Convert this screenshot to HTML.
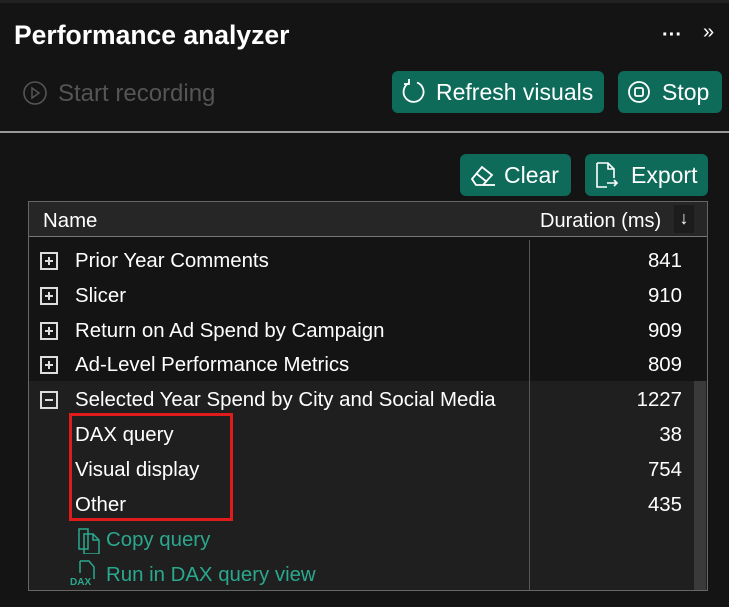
<!DOCTYPE html>
<html><head><style>
*{margin:0;padding:0;box-sizing:border-box}
body{width:729px;height:607px;background:#141414;font-family:"Liberation Sans",sans-serif;color:#fff;position:relative;overflow:hidden}
.a{position:absolute;white-space:nowrap}
.btn{position:absolute;background:#0e6b5a;border-radius:6px;color:#fff;font-size:23px;display:flex;align-items:center;padding-left:8px}
.row{position:absolute;left:30px;width:676px;height:35px;font-size:20.4px;line-height:35px}
.row .n{position:absolute;left:45px;top:2px}
.row .v{position:absolute;right:24px;top:2px}
.box{position:absolute;left:10px;top:10px;width:18px;height:18px;border:2px solid #ddd}
.box:before{content:"";position:absolute;left:3px;top:6px;width:8px;height:2px;background:#ddd}
.p:after{content:"";position:absolute;left:6px;top:3px;width:2px;height:8px;background:#ddd}
</style></head><body>
<div class="a" style="left:0;top:0;width:729px;height:3px;background:#222"></div>
<div class="a" style="left:14px;top:20px;font-size:26.5px;font-weight:bold">Performance analyzer</div>
<div class="a" style="left:662px;top:24px;font-size:20px;font-weight:bold">···</div>
<div class="a" style="left:703px;top:21px;font-size:20px">»</div>
<svg class="a" style="left:22px;top:80px" width="26" height="26"><circle cx="13" cy="13" r="11" fill="none" stroke="#555" stroke-width="1.6"/><path d="M10 8 L17 13 L10 18Z" fill="none" stroke="#555" stroke-width="1.5"/></svg>
<div class="a" style="left:58px;top:80px;font-size:24px;color:#555">Start recording</div>
<div class="btn" style="left:392px;top:71px;width:212px;height:42px"><svg width="28" height="28"><path d="M9 5 A10 10 0 1 0 17 4.5" fill="none" stroke="#fff" stroke-width="1.8"/><path d="M9 1 L9 6 L4 6" fill="none" stroke="#fff" stroke-width="1.8"/></svg><span style="margin-left:8px">Refresh visuals</span></div>
<div class="btn" style="left:618px;top:71px;width:104px;height:42px"><svg width="28" height="28"><circle cx="13" cy="14" r="10" fill="none" stroke="#fff" stroke-width="1.8"/><rect x="9" y="10" width="8" height="8" rx="1.5" fill="none" stroke="#fff" stroke-width="1.8"/></svg><span style="margin-left:8px">Stop</span></div>
<div class="a" style="left:0;top:131px;width:729px;height:1.5px;background:#999"></div>
<div class="btn" style="left:460px;top:154px;width:111px;height:42px"><svg width="30" height="28"><path d="M4 18 L14 6 L24 14 L15 24 L8 24Z M9 13 L19 21" fill="none" stroke="#fff" stroke-width="1.8"/><path d="M15 24 L27 24" stroke="#fff" stroke-width="1.8"/></svg><span style="margin-left:6px">Clear</span></div>
<div class="btn" style="left:585px;top:154px;width:123px;height:42px"><svg width="30" height="30"><path d="M4 3 L15 3 L21 9 L21 18 M15 3 L15 9 L21 9 M4 3 L4 27 L14 27" fill="none" stroke="#fff" stroke-width="1.6"/><path d="M14 23 L24 23 M21 20 L24 23 L21 26" fill="none" stroke="#fff" stroke-width="1.6"/></svg><span style="margin-left:8px">Export</span></div>
<div class="a" style="left:28px;top:201px;width:680px;height:390px;border:1.5px solid #666;background:#141414"></div>
<div class="a" style="left:29px;top:202px;width:678px;height:35px;background:#262626;border-bottom:1.5px solid #777"></div>
<div class="a" style="left:43px;top:210px;font-size:20.4px">Name</div>
<div class="a" style="left:540px;top:210px;font-size:20px">Duration (ms)</div>
<div class="a" style="left:674px;top:205px;width:20px;height:28px;background:#1c1c1c;font-size:18px;text-align:center;line-height:26px">↓</div>
<div class="a" style="left:29px;top:381px;width:678px;height:209px;background:#1f1f1f"></div>
<div class="a" style="left:694px;top:381px;width:12px;height:209px;background:#3a3a3a"></div>
<div class="a" style="left:529px;top:240px;width:1px;height:350px;background:#555"></div>
<div class="row" style="top:242px"><div class="box p"></div><span class="n">Prior Year Comments</span><span class="v">841</span></div>
<div class="row" style="top:277px"><div class="box p"></div><span class="n">Slicer</span><span class="v">910</span></div>
<div class="row" style="top:312px"><div class="box p"></div><span class="n">Return on Ad Spend by Campaign</span><span class="v">909</span></div>
<div class="row" style="top:346px"><div class="box p"></div><span class="n">Ad-Level Performance Metrics</span><span class="v">809</span></div>
<div class="row" style="top:381px"><div class="box"></div><span class="n">Selected Year Spend by City and Social Media</span><span class="v">1227</span></div>
<div class="row" style="top:416px"><span class="n">DAX query</span><span class="v">38</span></div>
<div class="row" style="top:451px"><span class="n">Visual display</span><span class="v">754</span></div>
<div class="row" style="top:486px"><span class="n">Other</span><span class="v">435</span></div>
<div class="a" style="left:69px;top:413px;width:164px;height:108px;border:3.5px solid #e01b1b"></div>
<svg class="a" style="left:76px;top:526px" width="26" height="28"><path d="M3 3 L12 3 L12 23 L3 23Z M8 8 L17 8 L23 14 L23 28 L8 28Z M17 8 L17 14 L23 14" fill="none" stroke="#2aa88e" stroke-width="1.5"/></svg>
<div class="a" style="left:106px;top:529px;font-size:20.4px;color:#2aa88e">Copy query</div>
<svg class="a" style="left:70px;top:559px" width="34" height="28"><path d="M10 2 L19 2 L24 8 L24 20 M10 2 L10 14" fill="none" stroke="#2aa88e" stroke-width="1.5"/><text x="0" y="26" font-size="10" font-weight="bold" fill="#2aa88e" font-family="Liberation Sans">DAX</text></svg>
<div class="a" style="left:106px;top:564px;font-size:20.4px;color:#2aa88e">Run in DAX query view</div>
</body></html>
